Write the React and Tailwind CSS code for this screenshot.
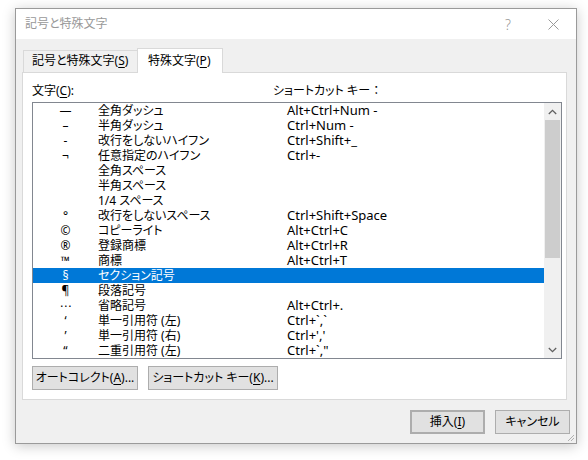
const rows = [
  ['—', '全角ダッシュ', 'Alt+Ctrl+Num -'],
  ['–', '半角ダッシュ', 'Ctrl+Num -'],
  ['-', '改行をしないハイフン', 'Ctrl+Shift+_'],
  ['¬', '任意指定のハイフン', 'Ctrl+-'],
  ['', '全角スペース', ''],
  ['', '半角スペース', ''],
  ['', '1/4 スペース', ''],
  ['°', '改行をしないスペース', 'Ctrl+Shift+Space'],
  ['©', 'コピーライト', 'Alt+Ctrl+C'],
  ['®', '登録商標', 'Alt+Ctrl+R'],
  ['™', '商標', 'Alt+Ctrl+T'],
  ['§', 'セクション記号', ''],
  ['¶', '段落記号', ''],
  ['⋯', '省略記号', 'Alt+Ctrl+.'],
  ['‘', '単一引用符 (左)', 'Ctrl+`,`'],
  ['’', '単一引用符 (右)', "Ctrl+','"],
  ['“', '二重引用符 (左)', 'Ctrl+`,"'],
];

const Key = ({ children }) => <span className="underline underline-offset-2">{children}</span>;

const Button = ({ children, className = '' }) => (
  <button className={`h-[24px] bg-[#e1e1e1] border border-[#adadad] text-[12px] text-black flex items-center justify-center ${className}`}>
    {children}
  </button>
);

const App = () => {
  return (
    <div className="w-[588px] h-[460px] bg-white overflow-hidden font-['Noto_Sans','Noto_Sans_CJK_JP',sans-serif] [font-feature-settings:'palt'] text-[12px] text-black">
      <div className="relative ml-[15px] mt-[8px] w-[562px] h-[436px] border border-[#9a9a9a] bg-[#f0f0f0] shadow-[0_2px_12px_rgba(0,0,0,0.22)] flex flex-col">
        {/* title bar */}
        <div className="h-[30px] bg-white flex items-center">
          <div className="pl-[9px] flex-1 text-[#999]">記号と特殊文字</div>
          <div className="w-[44px] h-full flex items-center justify-center text-[#999] text-[14px] font-light">?</div>
          <div className="w-[46px] h-full flex items-center justify-center">
            <svg width="11" height="11" viewBox="0 0 11 11">
              <path d="M0.5 0.5L10.5 10.5M10.5 0.5L0.5 10.5" stroke="#999" strokeWidth="1" />
            </svg>
          </div>
        </div>

        {/* tabs */}
        <div className="mt-[9px] ml-[7px] h-[25px] flex items-end">
          <div className="h-[23px] w-[115px] border border-[#d9d9d9] bg-[#f0f0f0] flex items-center pl-[8px] pb-[1px]">
            記号と特殊文字(<Key>S</Key>)
          </div>
          <div className="relative z-10 -ml-px h-[25px] w-[86px] border border-b-0 border-[#d9d9d9] bg-white flex items-center pl-[10px] pb-[1px]">
            特殊文字(<Key>P</Key>)
          </div>
        </div>

        {/* panel */}
        <div className="-mt-px ml-[6px] w-[545px] h-[328px] bg-white border border-[#d9d9d9] pl-[9px] pt-[10px]">
          <div className="h-[15px] flex items-center">
            <div className="w-[241px]">文字(<Key>C</Key>):</div>
            <div>ショートカット キー ：</div>
          </div>

          <div className="mt-[4px] w-[530px] h-[257px] border border-[#828790] flex">
            <div className="flex-1">
              {rows.map(([sym, name, key], i) => (
                <div key={i} className={`h-[15px] flex items-center ${i === 11 ? 'bg-[#0078d7] text-white' : ''}`}>
                  <div className="w-[65px] text-center font-['Noto_Sans','DejaVu_Sans',sans-serif] leading-[15px]">{sym}</div>
                  <div className="w-[189px] leading-[15px] whitespace-nowrap">{name}</div>
                  <div className="text-[13px] font-['Noto_Sans',sans-serif] leading-[15px] whitespace-nowrap">{key}</div>
                </div>
              ))}
            </div>
            <div className="w-[17px] bg-[#f0f0f0] flex flex-col">
              <div className="h-[17px] flex items-center justify-center">
                <svg width="9" height="6" viewBox="0 0 9 6">
                  <path d="M0.8 5L4.5 1.3L8.2 5" fill="none" stroke="#606060" strokeWidth="1.3" />
                </svg>
              </div>
              <div className="mx-[1px] h-[138px] bg-[#cdcdcd]" />
              <div className="flex-1" />
              <div className="h-[17px] flex items-center justify-center">
                <svg width="9" height="6" viewBox="0 0 9 6">
                  <path d="M0.8 1L4.5 4.7L8.2 1" fill="none" stroke="#606060" strokeWidth="1.3" />
                </svg>
              </div>
            </div>
          </div>

          <div className="mt-[7px] flex">
            <Button className="w-[106px]">オートコレクト(<Key>A</Key>)...</Button>
            <Button className="ml-[10px] w-[130px]">ショートカット キー(<Key>K</Key>)...</Button>
          </div>
        </div>

        {/* bottom buttons */}
        <div className="mt-[10px] mr-[6px] flex justify-end gap-[10px]">
          <Button className="w-[75px] border-2 border-[#0078d7]">挿入(<Key>I</Key>)</Button>
          <Button className="w-[75px]">キャンセル</Button>
        </div>

        {/* resize grip */}
        <svg className="absolute right-[1px] bottom-[1px]" width="10" height="10" viewBox="0 0 10 10">
          <path d="M9 3L3 9M9 6L6 9" stroke="#b0b0b0" strokeWidth="1" />
        </svg>
      </div>
    </div>
  );
};

export default App;
